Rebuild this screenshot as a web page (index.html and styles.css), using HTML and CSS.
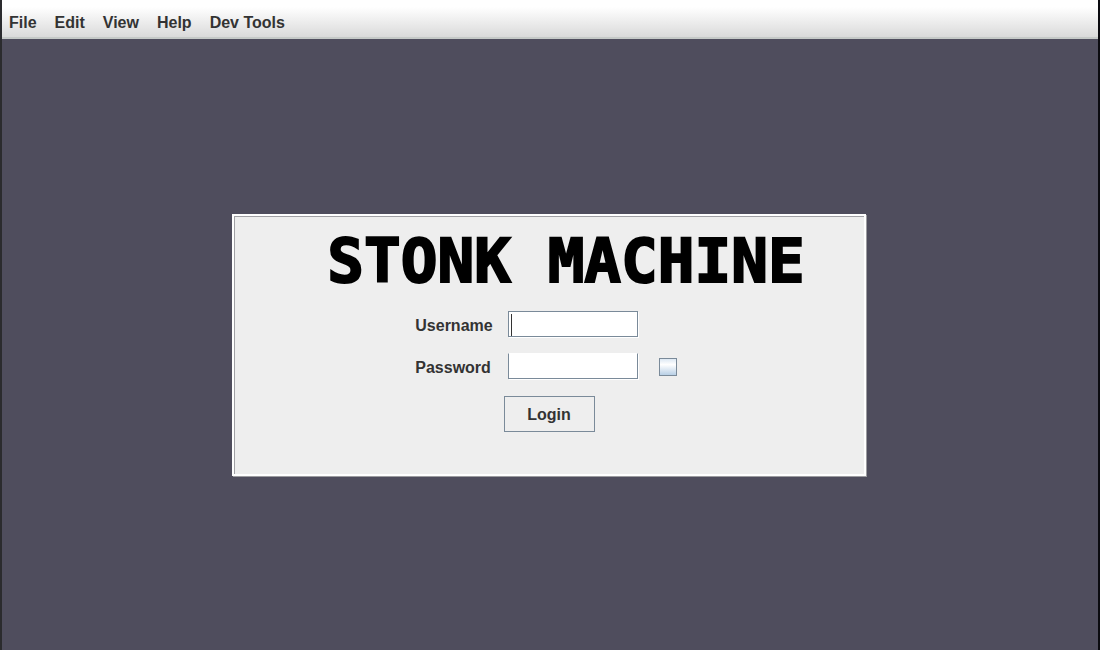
FILE: index.html
```html
<!DOCTYPE html>
<html lang="en">
<head>
<meta charset="utf-8">
<title>Stonk Machine</title>
<link rel="stylesheet" href="styles.css">
</head>
<body>
<div class="window">
  <nav class="menubar" aria-label="Main">
    <button type="button">File</button>
    <button type="button">Edit</button>
    <button type="button">View</button>
    <button type="button">Help</button>
    <button type="button">Dev Tools</button>
  </nav>
  <main class="desktop">
    <form class="panel">
      <div class="content">
        <h1 class="title">STONK MACHINE</h1>
        <div class="fields">
          <label for="username">Username</label>
          <input class="field focused" id="username" type="text">
          <label for="password">Password</label>
          <input class="field" id="password" type="password">
          <input class="check" type="checkbox" aria-label="Show password">
        </div>
      </div>
      <button class="login" type="button">Login</button>
    </form>
  </main>
</div>
</body>
</html>
```
FILE: styles.css
```css
* { box-sizing: border-box; }

body {
  margin: 0;
  font: bold 16px/20px "Liberation Sans", Arial, sans-serif;
  color: #333;
}

button, input { font: inherit; color: inherit; }

.window {
  display: flex;
  flex-direction: column;
  min-height: 100vh;
  border-left: 2px solid #2b2b2e;
  border-right: 2px solid #0b0b10;
  background: #4f4d5d;
}

.menubar {
  display: flex;
  gap: 18px;
  height: 39px;
  padding: 8px 7px 0;
  border-bottom: 2px solid #c5c9c7;
  background: linear-gradient(#fff 7px, #dadada);
}

.menubar button {
  padding: 0;
  border: 0;
  background: none;
}

.desktop {
  flex: 1;
  display: flex;
  align-items: center;
  justify-content: center;
  padding: 20px 22px 20px 20px;
}

.panel {
  display: flex;
  flex-direction: column;
  align-items: center;
  width: 100%;
  max-width: 634px;
  padding: 15px 0 42px;
  border: 2px solid #fff;
  background: #eee;
  box-shadow: inset 1px 1px #a0a0a4, 1px 1px #9c9ca0;
}

.content { padding-left: 34px; }

.title {
  margin: 0;
  font: bold 61px/60px "DejaVu Sans Mono", monospace;
  color: #000;
  white-space: nowrap;
  -webkit-text-stroke: 2px #000;
}

.fields {
  display: grid;
  grid-template-columns: 80px 130px auto;
  grid-auto-rows: 26px;
  gap: 16px 13px;
  align-items: center;
  justify-content: start;
  margin: 20px 0 17px 88px;
}

.fields label {
  grid-column: 1;
  padding-top: 5px;
}

.field {
  width: 100%;
  height: 26px;
  padding: 0 4px;
  border: 1px solid #7a8a99;
  background: #fff;
  box-shadow: 1px 1px #fff;
}

.field:not(.focused) { border-top-color: #fff; }

.focused {
  background: linear-gradient(#333, #333) 2px 2px / 1px 22px no-repeat #fff;
}

.check {
  appearance: none;
  width: 18px;
  height: 18px;
  margin: 2px 0 0 8px;
  border: 1px solid #7a8a99;
  background: linear-gradient(#dde8f3, #fff 35%, #b8cfe5);
}

.login {
  width: 91px;
  height: 36px;
  padding: 3px 0 0;
  border: 1px solid #7a8a99;
  background: #eee;
}
```
